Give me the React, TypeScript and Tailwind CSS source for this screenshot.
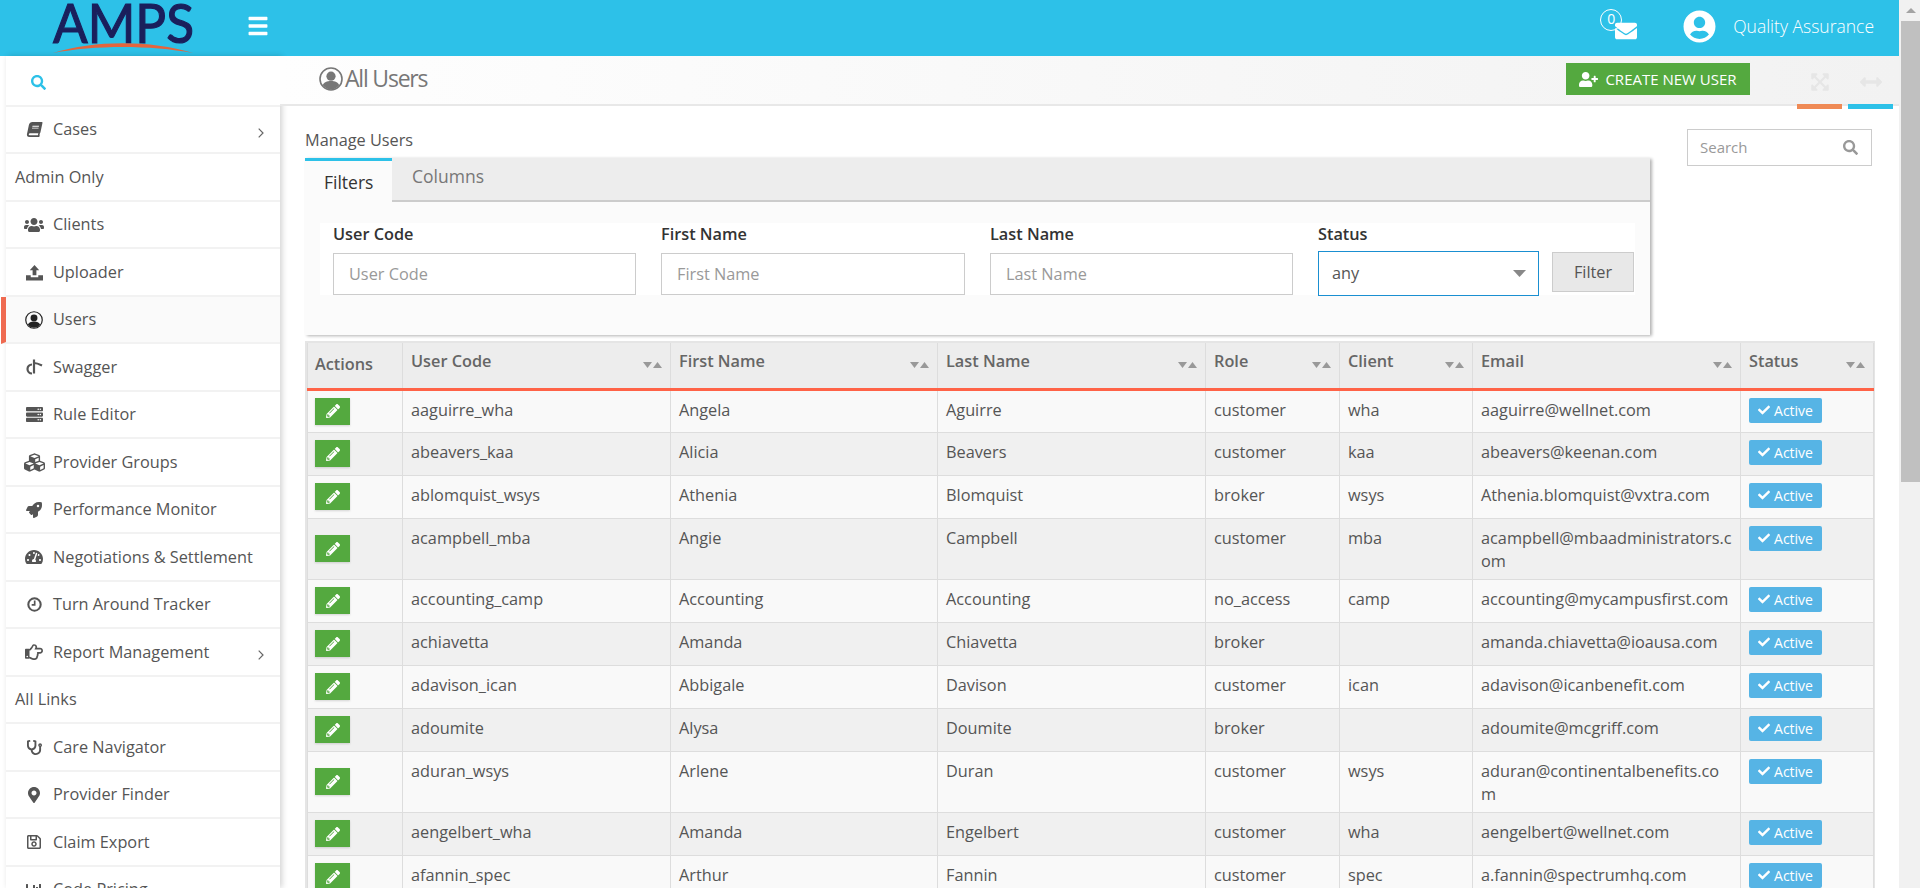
import React from "react";
import {
  FaBook, FaUsers, FaUserCircle, FaServer, FaCubes, FaRocket, FaTachometerAlt, FaRegHandPointRight,
  FaStethoscope, FaMapMarkerAlt, FaRegSave, FaChartBar, FaSearch, FaPencilAlt, FaCheck, FaEnvelope,
  FaUserPlus, FaExpandArrowsAlt, FaArrowsAltH, FaBars,
} from "react-icons/fa";

const Upload = () => (
  <svg viewBox="0 0 18 18" className="w-[17px] h-[17px]" fill="currentColor">
    <path d="M9 1l5 5.5h-3V12H7V6.5H4z" />
    <path d="M0 12h5v2h8v-2h5v5.5H0z" />
  </svg>
);
const Swagger = () => (
  <svg viewBox="0 0 18 18" className="w-[18px] h-[18px]" fill="none" stroke="currentColor" strokeWidth="2.2">
    <path d="M7 6.5a4.5 4.5 0 1 0 0 9" />
    <path d="M9 1.5V15.5" />
    <path d="M9 5c3 0 4 .5 8 2.5" />
  </svg>
);
const UserRing = ({ size, className }: { size: number; className?: string }) => (
  <svg viewBox="0 0 24 24" width={size} height={size} className={className} fill="currentColor">
    <circle cx="12" cy="12" r="11" fill="none" stroke="currentColor" strokeWidth="1.6" />
    <circle cx="12" cy="9.2" r="4.6" />
    <path d="M3.8 18.2C5 15 8 14 12 14s7 1 8.2 4.2A10.6 10.6 0 0 1 12 22.4a10.6 10.6 0 0 1-8.2-4.2z" />
  </svg>
);
const Clock = () => (
  <svg viewBox="0 0 16 16" className="w-[15px] h-[15px]" fill="none" stroke="currentColor" strokeWidth="2.2">
    <circle cx="8" cy="8" r="6.6" />
    <path d="M8.2 3.8V8.4H5" strokeWidth="1.8" />
  </svg>
);
const Chevron = () => (
  <svg viewBox="0 0 6 10" className="ml-auto mt-[6px] h-[10px] w-[6px]" fill="none" stroke="#666" strokeWidth="1.2">
    <path d="M.7.7L5 5 .7 9.3" />
  </svg>
);

type Item = { label: string; icon?: React.ReactNode; chevron?: boolean; active?: boolean; group?: boolean };
const menu: Item[] = [
  { label: "Cases", icon: <FaBook size={15} className="-skew-x-12" />, chevron: true },
  { label: "Admin Only", group: true },
  { label: "Clients", icon: <FaUsers size={20} /> },
  { label: "Uploader", icon: <Upload /> },
  { label: "Users", icon: <UserRing size={18} className="text-[#222]" />, active: true },
  { label: "Swagger", icon: <Swagger /> },
  { label: "Rule Editor", icon: <FaServer size={17} /> },
  { label: "Provider Groups", icon: <FaCubes size={21} /> },
  { label: "Performance Monitor", icon: <FaRocket size={16} /> },
  { label: "Negotiations & Settlement", icon: <FaTachometerAlt size={18} /> },
  { label: "Turn Around Tracker", icon: <Clock /> },
  { label: "Report Management", icon: <FaRegHandPointRight size={18} />, chevron: true },
  { label: "All Links", group: true },
  { label: "Care Navigator", icon: <FaStethoscope size={15} /> },
  { label: "Provider Finder", icon: <FaMapMarkerAlt size={16} /> },
  { label: "Claim Export", icon: <FaRegSave size={16} /> },
  { label: "Code Pricing", icon: <FaChartBar size={16} /> },
];

const rows = [
  ["aaguirre_wha", "Angela", "Aguirre", "customer", "wha", "aaguirre@wellnet.com"],
  ["abeavers_kaa", "Alicia", "Beavers", "customer", "kaa", "abeavers@keenan.com"],
  ["ablomquist_wsys", "Athenia", "Blomquist", "broker", "wsys", "Athenia.blomquist@vxtra.com"],
  ["acampbell_mba", "Angie", "Campbell", "customer", "mba", "acampbell@mbaadministrators.com"],
  ["accounting_camp", "Accounting", "Accounting", "no_access", "camp", "accounting@mycampusfirst.com"],
  ["achiavetta", "Amanda", "Chiavetta", "broker", "", "amanda.chiavetta@ioausa.com"],
  ["adavison_ican", "Abbigale", "Davison", "customer", "ican", "adavison@icanbenefit.com"],
  ["adoumite", "Alysa", "Doumite", "broker", "", "adoumite@mcgriff.com"],
  ["aduran_wsys", "Arlene", "Duran", "customer", "wsys", "aduran@continentalbenefits.com"],
  ["aengelbert_wha", "Amanda", "Engelbert", "customer", "wha", "aengelbert@wellnet.com"],
  ["afannin_spec", "Arthur", "Fannin", "customer", "spec", "a.fannin@spectrumhq.com"],
];

const Sort = () => (
  <svg viewBox="0 0 19 6" className="w-[19px] h-[6px] shrink-0 mt-[12px]" fill="#999">
    <path d="M0 0h9L4.5 6z" />
    <path d="M10 6h9L14.5 0z" />
  </svg>
);

const Th = ({ label }: { label: string }) => (
  <th className="border-x border-[#ddd] border-b-[3px] border-b-[#ff6347] bg-[#ededed] px-2 pt-[7px] align-top text-left font-semibold text-[#666]">
    <div className="flex justify-between">
      <span>{label}</span>
      <Sort />
    </div>
  </th>
);

const Field = ({ label, className }: { label: string; className: string }) => (
  <div className={className}>
    <label className="block font-semibold text-[#333] leading-[23px] mb-[7px]">{label}</label>
    <input placeholder={label} className="block w-full h-[42px] border border-[#ccc] bg-white px-[15px] outline-none placeholder:text-[#999]" />
  </div>
);

export default function App() {
  return (
    <div className="flex h-[888px] w-[1920px] overflow-hidden bg-white text-[16.3px] leading-[23px] text-[#555] [font-family:'Open_Sans',sans-serif]">
      <div className="flex h-full w-[1899px] flex-col">
        <header className="flex h-[56px] shrink-0 items-center bg-[#2dc1e8] text-white">
          <svg viewBox="0 0 146 56" className="ml-[50px] h-[56px] w-[146px]">
            <text x="3" y="43" textLength="141" lengthAdjust="spacingAndGlyphs" fill="#1a1f5c" stroke="#1a1f5c" strokeWidth="1.2" fontSize="55" fontFamily="Lato, sans-serif">AMPS</text>
            <path d="M3 53C45 40 100 40 143 53C100 45 45 45 3 53z" fill="#e4653d" />
          </svg>
          <FaBars size={24} className="ml-[50px] mt-[-4px] scale-x-90" />
          <div className="ml-auto mt-[-3px] flex items-center">
            <div className="relative h-[40px] w-[40px]">
              <span className="absolute left-0 top-[2px] flex h-[22px] w-[22px] items-start justify-center rounded-full border border-white pt-[2px] text-[14px] leading-none">0</span>
              <FaEnvelope size={22} className="absolute left-[15px] top-[13px]" />
            </div>
            <FaUserCircle size={33} className="ml-[43px]" />
            <span className="ml-[17px] mr-[25px] text-[17.5px] font-light">Quality Assurance</span>
          </div>
        </header>
        <div className="flex min-h-0 flex-1">
          <aside className="w-[280px] shrink-0 pl-[6px]">
            <nav className="h-full w-[274px] bg-white shadow-[2px_0_6px_rgba(0,0,0,0.18)]">
              <div className="flex h-[50.5px] items-center border-b-2 border-[#f2f2f2] pl-[25px] pt-[4px] text-[#2dc1e8]">
                <FaSearch size={15} />
              </div>
              {menu.map((m) => (
                <div
                  key={m.label}
                  className={
                    m.group
                      ? "flex h-[47.5px] items-center border-b-2 border-[#f2f2f2] pl-[9px] pt-[1px]"
                      : m.active
                      ? "-ml-[5px] flex h-[47.5px] items-center border-b-2 border-l-[5px] border-b-[#f2f2f2] border-l-[#ef6a50] bg-[#fafafa] pr-[16px] pt-[1px]"
                      : "flex h-[47.5px] items-center border-b-2 border-[#f2f2f2] pr-[16px] pt-[1px]"
                  }
                >
                  {!m.group && <span className="flex w-[47px] justify-center pl-[9px]">{m.icon}</span>}
                  <span className="whitespace-nowrap">{m.label}</span>
                  {m.chevron && <Chevron />}
                </div>
              ))}
            </nav>
          </aside>
          <main className="min-w-0 flex-1">
            <div className="relative flex h-[50px] items-center border-b-2 border-[#e8e8e8] bg-linear-to-r from-[#fefefe] to-[#f2f2f2]">
              <UserRing size={24} className="ml-[39px] mb-[3px] text-[#777]" />
              <h1 className="ml-[2px] mb-[3px] text-[23px] tracking-[-1.2px] text-[#777]">All Users</h1>
              <button className="ml-auto mb-[2px] flex h-[32px] w-[184px] items-center justify-center gap-[7px] bg-[#54a93f] text-[15px] text-white">
                <FaUserPlus size={19} />
                CREATE NEW USER
              </button>
              <div className="relative ml-[47px] flex h-full w-[45px] items-center justify-center pt-[4px] text-[#e6e6e6]">
                <FaExpandArrowsAlt size={20} />
                <span className="absolute bottom-[-5px] left-0 h-[5px] w-full bg-[#ef8a55]" />
              </div>
              <div className="relative ml-[6px] mr-[6px] flex h-full w-[45px] items-center justify-center pt-[4px] text-[#e6e6e6]">
                <FaArrowsAltH size={22} />
                <span className="absolute bottom-[-5px] left-0 h-[5px] w-full bg-[#2dc1e8]" />
              </div>
            </div>
            <div className="pl-[25px]">
              <div className="flex">
                <div className="w-[1345px]">
                  <div className="pt-[23px] leading-[22px]">Manage Users</div>
                  <div className="mt-[7px] h-[177px] bg-[#fbfbfb] shadow-[2px_1px_3px_rgba(0,0,0,0.3)]">
                    <div className="flex h-[44px] border-b-2 border-[#ccc] bg-[#ededed]">
                      <div className="h-[44px] w-[87px] border-t-[3px] border-[#2dc1e8] bg-[#fbfbfb] pl-[19px] pt-[10px] text-[17.5px] text-[#333]">Filters</div>
                      <div className="pl-[20px] pt-[7px] text-[17.5px] text-[#777]">Columns</div>
                    </div>
                    <div className="mx-[15px] mt-[21px] flex h-[72px] bg-white pl-[13px]">
                      <Field label="User Code" className="w-[303px]" />
                      <Field label="First Name" className="ml-[25px] w-[304px]" />
                      <Field label="Last Name" className="ml-[25px] w-[303px]" />
                      <div className="ml-[25px] w-[221px]">
                        <label className="block font-semibold text-[#333] leading-[23px] mb-[5px]">Status</label>
                        <div className="relative">
                          <select className="block h-[45px] w-full appearance-none border border-[#1a8fd1] bg-white px-[13px] text-[#555] outline-none">
                            <option>any</option>
                          </select>
                          <svg viewBox="0 0 13 7" className="pointer-events-none absolute right-[13px] top-[19px] h-[7px] w-[13px]" fill="#888"><path d="M0 0h13L6.5 7z" /></svg>
                        </div>
                      </div>
                      <button className="ml-[13px] mt-[29px] h-[40px] w-[82px] border border-[#ccc] bg-[#e8e8e8] text-[#555]">Filter</button>
                    </div>
                  </div>
                </div>
                <div className="ml-[37px] mt-[23px] flex h-[37px] w-[185px] items-center justify-between border border-[#ccc] pl-[12px] pr-[13px]">
                  <input placeholder="Search" className="w-[120px] text-[15px] outline-none placeholder:text-[#999]" />
                  <FaSearch size={15} className="text-[#999]" />
                </div>
              </div>
              <div className="mt-[6px] w-[1570px] border-2 border-[#e5e5e5]">
                <table className="w-[1566px] table-fixed border-collapse">
                  <colgroup>
                    {[95, 268, 267, 268, 134, 133, 268, 133].map((w, i) => (
                      <col key={i} style={{ width: w }} />
                    ))}
                  </colgroup>
                  <thead>
                    <tr className="h-[46px]">
                      <th className="border-x border-[#ddd] border-b-[3px] border-b-[#ff6347] bg-[#ededed] pl-[7px] pr-2 pt-[10px] align-top text-left font-semibold text-[#666]">Actions</th>
                      {["User Code", "First Name", "Last Name", "Role", "Client", "Email", "Status"].map((h) => (
                        <Th key={h} label={h} />
                      ))}
                    </tr>
                  </thead>
                  <tbody>
                    {rows.map((r, i) => (
                      <tr key={r[0]} className={i % 2 ? "h-[43px] bg-[#f0f0f0]" : "h-[43px] bg-[#f9f9f9]"}>
                        <td className="border border-[#ddd] pl-[7px] pr-2 align-middle">
                          <button className="flex h-[27px] w-[35px] items-center justify-center bg-[#54a93f] text-white shadow-[0_1px_2px_rgba(0,0,0,0.15)]">
                            <FaPencilAlt size={14} />
                          </button>
                        </td>
                        {r.map((c, j) => (
                          <td key={j} className="border border-[#ddd] px-2 pb-[6px] pt-[8px] align-top [overflow-wrap:anywhere]">{c}</td>
                        ))}
                        <td className="border border-[#ddd] px-2 align-top pt-[7px]">
                          <span className="flex h-[25px] w-[73px] items-center justify-center gap-[4px] rounded-[2px] bg-[#56b4e5] text-[14px] text-white">
                            <FaCheck size={12} /> Active
                          </span>
                        </td>
                      </tr>
                    ))}
                  </tbody>
                </table>
              </div>
            </div>
          </main>
        </div>
      </div>
      <div className="relative h-full w-[21px] shrink-0 bg-[#f1f1f1] pl-[2px]">
        <svg viewBox="0 0 10 5" className="mx-auto mt-[8px] h-[5px] w-[10px]" fill="#a3a3a3"><path d="M0 5h10L5 0z" /></svg>
        <div className="mt-[8px] h-[461px] w-full bg-[#c0c0c0]" />
      </div>
    </div>
  );
}
